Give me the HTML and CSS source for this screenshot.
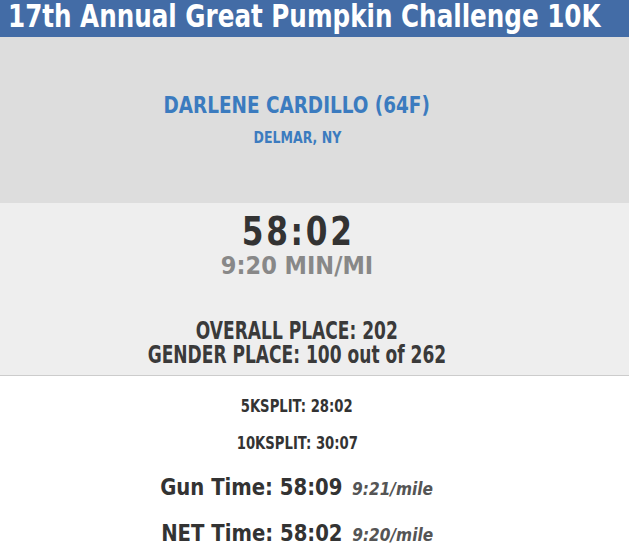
FILE: index.html
```html
<!DOCTYPE html>
<html lang="en">
<head>
<meta charset="utf-8">
<title>17th Annual Great Pumpkin Challenge 10K</title>
<link rel="stylesheet" href="styles.css">
</head>
<body>
<header class="race-header">
  <h1 class="race-title">17th Annual Great Pumpkin Challenge 10K</h1>
</header>
<section class="runner">
  <div class="runner-name">DARLENE CARDILLO (64F)</div>
  <div class="runner-location">DELMAR, NY</div>
</section>
<section class="result">
  <div class="result-time">58:02</div>
  <div class="result-pace">9:20 MIN/MI</div>
  <div class="result-place result-overall">OVERALL PLACE: 202</div>
  <div class="result-place">GENDER PLACE: 100 out of 262</div>
</section>
<section class="details">
  <div class="split split-first">5KSPLIT: 28:02</div>
  <div class="split split-next">10KSPLIT: 30:07</div>
  <div class="timing timing-gun">Gun Time: 58:09 <em class="timing-pace">9:21/mile</em></div>
  <div class="timing timing-net">NET Time: 58:02 <em class="timing-pace">9:20/mile</em></div>
</section>
</body>
</html>
```
FILE: styles.css
```css
html, body {
  margin: 0;
  padding: 0;
  background: #ffffff;
}
html {
  overflow-x: hidden;
}
body {
  font-family: "DejaVu Sans", sans-serif;
  font-stretch: condensed;
  font-weight: bold;
  color: #333333;
}
.race-header {
  background: #436ca6;
  height: 37px;
  padding-left: 8px;
}
.race-title {
  margin: 0;
  color: #ffffff;
  font-size: 32px;
  line-height: 32px;
  font-weight: bold;
  white-space: nowrap;
  width: fit-content;
  transform: scaleX(0.855);
  transform-origin: 0 50%;
}
.runner, .result, .details {
  text-align: center;
  padding-right: 35px;
}
.runner > div, .result > div, .details > div {
  width: fit-content;
  margin-left: auto;
  margin-right: auto;
  white-space: nowrap;
}
.runner {
  background: #dddddd;
  padding-top: 53px;
  padding-bottom: 55px;
}
.runner-name {
  color: #3b7bbf;
  font-size: 23px;
  line-height: 30px;
  transform: scaleX(0.89);
}
.runner-location {
  color: #3b7bbf;
  font-size: 16px;
  line-height: 20px;
  margin-top: 8px;
  transform: scaleX(0.87);
}
.result {
  background: #eeeeee;
  padding-top: 9px;
  padding-bottom: 8px;
  border-bottom: 1px solid #cccccc;
}
.result-time {
  font-size: 39px;
  line-height: 40px;
  letter-spacing: 3px;
  padding-left: 3px;
  color: #333333;
  transform: scaleX(0.89);
}
.result-pace {
  font-size: 25px;
  line-height: 28px;
  color: #888888;
}
.result-place {
  font-size: 24px;
  line-height: 24px;
  color: #3a3a3a;
  transform: scaleX(0.79);
}
.result-overall {
  margin-top: 39px;
}
.details {
  padding-top: 20px;
  padding-bottom: 8px;
  border-bottom: 2px solid #cccccc;
}
.split {
  font-size: 18px;
  line-height: 20px;
  transform: scaleX(0.815);
}
.split-next {
  margin-top: 17px;
}
.timing {
  font-size: 23px;
  line-height: 30px;
  transform: scaleX(0.95);
}
.timing-gun {
  margin-top: 19px;
}
.timing-net {
  margin-top: 14px;
}
.timing-pace {
  font-size: 18px;
  font-style: italic;
  color: #555555;
  margin-left: 3px;
}
```
